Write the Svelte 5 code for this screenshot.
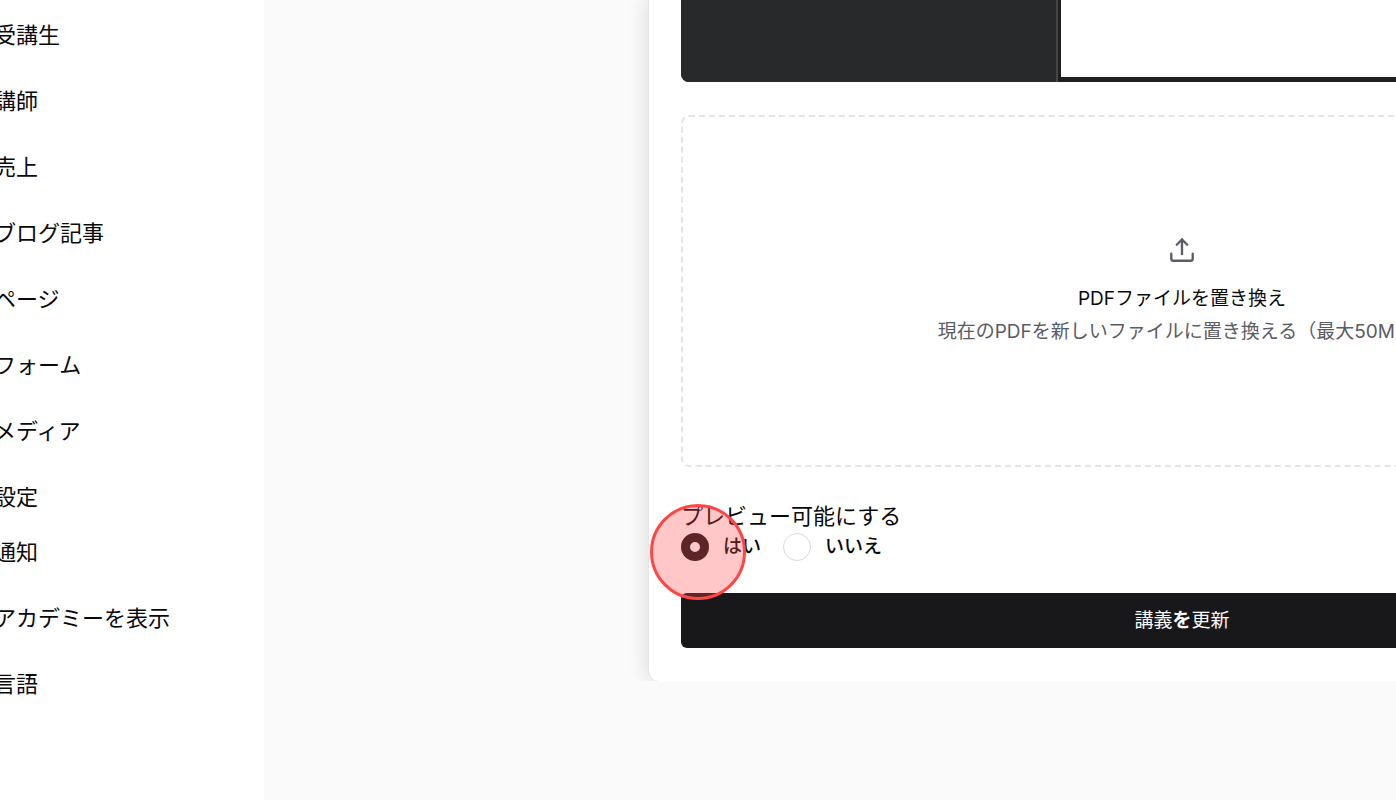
<script lang="ts">
  const primaryLinks = ['受講生', '講師', '売上', 'ブログ記事', 'ページ', 'フォーム', 'メディア', '設定'];
  const secondaryLinks = ['通知', 'アカデミーを表示', '言語'];

  let preview = $state('yes');
</script>

<div class="layout">
  <aside class="sidebar">
    <nav class="nav">
      {#each primaryLinks as link}
        <a href="#top">{link}</a>
      {/each}
    </nav>
    <nav class="nav">
      {#each secondaryLinks as link}
        <a href="#top">{link}</a>
      {/each}
    </nav>
  </aside>

  <main class="main">
    <form class="card" onsubmit={(e) => e.preventDefault()}>
      <div class="viewer">
        <div class="thumbnails"></div>
        <div class="page"></div>
      </div>

      <button type="button" class="dropzone">
        <svg viewBox="0 0 24 24" fill="none" stroke="currentColor" stroke-width="2" stroke-linecap="round" stroke-linejoin="round" aria-hidden="true">
          <path d="M21.2 15.2v4a2 2 0 0 1-2 2H4.800a2 2 0 0 1-2-2v-4" />
          <polyline points="16.500 7.500 12 3 7.500 7.500" />
          <line x1="12" x2="12" y1="3" y2="15.500" />
        </svg>
        <span class="dropzone-title">PDFファイルを置き換え</span>
        <span class="dropzone-hint">現在のPDFを新しいファイルに置き換える（最大50MB）</span>
      </button>

      <fieldset class="preview">
        <legend>プレビュー可能にする</legend>
        <div class="options">
          <label><input type="radio" name="preview" value="yes" bind:group={preview} />はい</label>
          <label><input type="radio" name="preview" value="no" bind:group={preview} />いいえ</label>
        </div>
        <span class="highlight"></span>
      </fieldset>

      <button type="submit" class="submit">講義<b>を</b>更新</button>
    </form>
  </main>
</div>

<style>
  :global(body) {
    margin: 0;
    background: #fafafa;
  }

  .layout {
    display: flex;
    min-height: 100vh;
    overflow: hidden;
    color: #09090b;
    font-family: Inter, 'Noto Sans CJK JP', sans-serif;
  }

  .sidebar {
    box-sizing: border-box;
    flex: 0 0 264px;
    padding-top: 8px;
    background: #fff;
  }

  .nav {
    display: flex;
    flex-direction: column;
    gap: 11px;
    margin-left: -6px;
  }

  .nav a {
    font-size: 22px;
    line-height: 55px;
    color: inherit;
    text-decoration: none;
    white-space: nowrap;
  }

  .main {
    flex: 1;
    min-width: 0;
    align-self: flex-start;
    padding-left: 384px;
    overflow: hidden;
  }

  .card {
    box-sizing: border-box;
    margin-right: -320px;
    padding: 0 32px 33px;
    border: solid #e4e4e7;
    border-width: 0 1px;
    border-radius: 0 0 11px 11px;
    background: #fff;
    box-shadow: 0 0 22px rgba(0, 0, 0, 0.14);
  }

  .viewer {
    display: flex;
    height: 82px;
    overflow: hidden;
    border-radius: 0 0 8px 8px;
    background: #1f1f1f;
  }

  .thumbnails {
    box-sizing: border-box;
    width: 377px;
    border-right: 2px solid #444546;
    background: #28292a;
  }

  .page {
    flex: 1;
    margin: 0 0 5px 3px;
    background: #fff;
  }

  .dropzone {
    box-sizing: border-box;
    display: flex;
    flex-direction: column;
    align-items: center;
    justify-content: center;
    width: 100%;
    height: 352px;
    margin-top: 33px;
    padding: 0;
    border: 2px dashed #e4e4e7;
    border-radius: 8px;
    background: transparent;
    color: #5b5b64;
    font-family: inherit;
    font-size: 19px;
    line-height: 33px;
    white-space: nowrap;
  }

  .dropzone svg {
    width: 28px;
    height: 28px;
    margin: 2px 0 18px;
  }

  .dropzone-title {
    color: #09090b;
  }

  .preview {
    position: relative;
    margin: 33px 0 0;
    padding: 0;
    border: 0;
  }

  .preview legend {
    padding: 0;
    font-size: 22px;
    line-height: 33px;
  }

  .options {
    display: flex;
    gap: 22px;
    height: 27px;
  }

  .options label {
    display: flex;
    align-items: center;
    gap: 14px;
    font-size: 19px;
    font-weight: 500;
    line-height: 27px;
  }

  .options input {
    appearance: none;
    box-sizing: border-box;
    width: 28px;
    height: 28px;
    margin: 0;
    border: 1px solid #d9d9dc;
    border-radius: 50%;
    background: #fff;
  }

  .options input:checked {
    border: 9px solid #18181b;
  }

  /* click marker drawn over the selected option */
  .highlight {
    position: absolute;
    top: 4px;
    left: -31px;
    box-sizing: border-box;
    width: 96px;
    height: 96px;
    margin-top: -33px;
    border: 3px solid #ff4646;
    border-radius: 50%;
    background: rgba(255, 70, 70, 0.3);
    pointer-events: none;
    z-index: 1;
  }

  .submit {
    display: block;
    width: 100%;
    margin-top: 33px;
    padding: 0;
    border: 0;
    border-radius: 6px;
    background: #18181b;
    color: #fafafa;
    font-family: inherit;
    font-size: 19px;
    line-height: 55px;
  }

  .submit b {
    font-weight: 600;
  }
</style>
